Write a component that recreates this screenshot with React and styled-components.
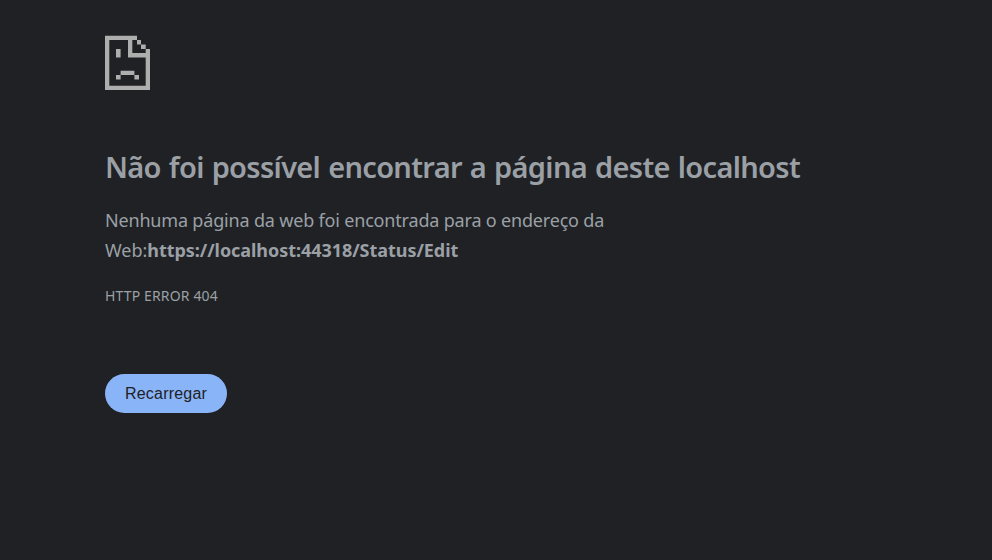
import React from 'react';
import styled, { createGlobalStyle } from 'styled-components';

const Global = createGlobalStyle`
  * { box-sizing: border-box; }
  body { margin: 0; background: #202124; color: #9aa0a6; font-family: "Noto Sans", "Open Sans", sans-serif; }
`;
const Page = styled.main`
  min-height: 560px;
  padding: 35px 105px 0;
  display: flex;
  flex-direction: column;
  align-items: flex-start;
`;
const Icon = styled.svg`
  display: block;
  width: 45px;
  height: 55px;
  fill: #aeaeae;
`;
const Title = styled.h1`
  margin: 56px 0 0;
  font-size: 29px;
  line-height: 42px;
  font-weight: 600;
  letter-spacing: -0.67px;
  word-spacing: 1.1px;
  white-space: nowrap;
`;
const Line = styled.span`
  display: block;
  white-space: nowrap;
  letter-spacing: ${(p) => p.$spacing || 0};
`;
const Message = styled.p`
  margin: 17px 0 0;
  font-size: 18px;
  line-height: 30px;
`;
const ErrorCode = styled.div`
  margin-top: 21px;
  font-size: 14px;
  line-height: 20px;
`;
const Reload = styled.button`
  margin-top: 68px;
  width: 122px;
  height: 39px;
  padding: 0;
  border: 0;
  border-radius: 20px;
  background: #8ab4f8;
  color: #202124;
  font: 16px "Liberation Sans", Arial, sans-serif;
  letter-spacing: 0.2px;
`;

export default function App() {
  return (
    <>
      <Global />
      <Page>
        <Icon viewBox="0 0 45 55">
          <path fillRule="evenodd" d="M0 .7H32V5H36V9.5H40.7V14H45V55H0ZM4.3 5V50.7H40.7V22.5H23V5ZM27.3 5V18H40.7V14H36V9.5H32V5Z" />
          <path d="M11 14H15.6V22.6H11ZM15.6 35.8H29.4V40H34V44.5H29.4V40H15.6V44.5H11V40H15.6Z" />
        </Icon>
        <Title>Não foi possível encontrar a página deste localhost</Title>
        <Message>
          <Line $spacing="-0.18px">Nenhuma página da web foi encontrada para o endereço da</Line>
          <Line $spacing="-0.05px">Web:<b>https://localhost:44318/Status/Edit</b></Line>
        </Message>
        <ErrorCode><Line $spacing="0.15px">HTTP ERROR 404</Line></ErrorCode>
        <Reload>Recarregar</Reload>
      </Page>
    </>
  );
}
